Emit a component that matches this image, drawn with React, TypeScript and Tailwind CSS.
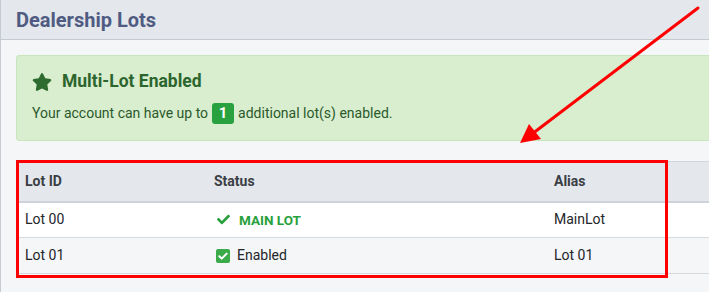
import React from 'react';

interface Lot {
  id: string;
  status: 'main' | 'enabled';
  alias: string;
}

const lots: Lot[] = [
  { id: 'Lot 00', status: 'main', alias: 'MainLot' },
  { id: 'Lot 01', status: 'enabled', alias: 'Lot 01' },
];

const StarIcon = () => (
  <svg viewBox="0 0 576 512" className="w-[20px] h-[18px] fill-[#2e6b2e]">
    <path d="M259.3 17.8L194 150.2 47.9 171.5c-26.2 3.8-36.7 36.1-17.7 54.6l105.7 103-25 145.5c-4.5 26.3 23.2 46 46.4 33.7L288 439.6l130.7 68.7c23.2 12.2 50.9-7.4 46.4-33.7l-25-145.5 105.7-103c19-18.5 8.5-50.8-17.700-54.6L382 150.2 316.7 17.8c-11.7-23.6-45.6-23.9-57.4 0z" />
  </svg>
);

const CheckIcon = () => (
  <svg viewBox="0 0 512 512" className="w-[15px] h-[13px] fill-[#28a03c]">
    <path d="M173.9 439.4l-166.4-166.4c-10-10-10-26.2 0-36.2l36.2-36.2c10-10 26.2-10 36.2 0L192 312.7 432.1 72.6c10-10 26.2-10 36.2 0l36.2 36.2c10 10 10 26.2 0 36.2L210.1 439.4c-10 10-26.2 10-36.2 0z" />
  </svg>
);

const CheckSquare = () => (
  <span className="w-[14px] h-[14px] rounded-[2px] bg-[#3bab4a] flex items-center justify-center">
    <svg viewBox="0 0 14 14" className="w-[14px] h-[14px]">
      <path d="M3.3 7.2l2.4 2.4 5-5" fill="none" stroke="white" strokeWidth="2" strokeLinecap="round" strokeLinejoin="round" />
    </svg>
  </span>
);

export default function App() {
  return (
    <div className="relative w-[709px] h-[292px] overflow-hidden bg-[#f5f6f8] font-['Roboto',sans-serif]">
      <div className="w-[780px] h-full border-l border-[#c6cad1]">
        {/* Card header */}
        <div className="h-[40px] bg-[#e4e7ec] border-b border-[#c5c9d0] px-[15px] flex items-center">
          <h1 className="text-[20px] font-bold text-[#4f5b82] leading-none">Dealership Lots</h1>
        </div>

        <div className="px-[15px] pt-[15px]">
          {/* Alert */}
          <div className="h-[86px] bg-[#d9edcf] border border-[#c9e5bd] rounded-[3px] px-[15px] pt-[17px]">
            <div className="flex items-center gap-[10px]">
              <StarIcon />
              <span className="text-[17.5px] font-bold text-[#2c652d] leading-none">Multi-Lot Enabled</span>
            </div>
            <p className="mt-[12px] text-[14px] text-[#2b5a2b] flex items-center gap-[4px]">
              <span>Your account can have up to</span>
              <span className="inline-flex items-center justify-center w-[22px] h-[21px] rounded-[3px] bg-[#28a13e] text-white font-bold text-[15px]">1</span>
              <span>additional lot(s) enabled.</span>
            </p>
          </div>

          {/* Lots table */}
          <table className="mt-[20px] w-[760px] border-collapse text-left">
            <thead>
              <tr className="bg-[#e4e7ec] border-t border-[#d3d7dd] border-b-2 border-b-[#cfd3d9]">
                <th className="w-[190px] h-[40px] px-[9px] text-[14px] font-bold text-[#3a3e45]">Lot ID</th>
                <th className="w-[340px] px-[8px] text-[14px] font-bold text-[#3a3e45]">Status</th>
                <th className="px-[8px] text-[14px] font-bold text-[#3a3e45]">Alias</th>
              </tr>
            </thead>
            <tbody>
              {lots.map((lot, i) => (
                <tr key={lot.id} className={`border-b border-[#d6d9de] ${i % 2 === 0 ? 'bg-white' : 'bg-[#f5f6f8]'}`}>
                  <td className="h-[36px] px-[9px] text-[14px] text-[#232529]">{lot.id}</td>
                  <td className="px-[8px] text-[14px] text-[#232529]">
                    {lot.status === 'main' ? (
                      <span className="flex items-center gap-[8px] pl-[2px]">
                        <CheckIcon />
                        <span className="text-[13.5px] font-bold text-[#28a03c]">MAIN LOT</span>
                      </span>
                    ) : (
                      <span className="flex items-center gap-[7px] pl-[2px]">
                        <CheckSquare />
                        <span>Enabled</span>
                      </span>
                    )}
                  </td>
                  <td className="px-[8px] text-[14px] text-[#232529]">{lot.alias}</td>
                </tr>
              ))}
            </tbody>
          </table>
        </div>
      </div>

      {/* Annotation: red box around table */}
      <div className="absolute left-[16px] top-[160px] w-[652px] h-[118px] border-[3px] border-[#ff0000] pointer-events-none" />

      {/* Annotation: arrow */}
      <svg className="absolute inset-0 pointer-events-none" width="709" height="292" viewBox="0 0 709 292">
        <line x1="698" y1="8" x2="532" y2="134" stroke="#ff0000" strokeWidth="3" strokeLinecap="round" />
        <polygon points="520,143 529,124 541,139" fill="#ff0000" />
      </svg>
    </div>
  );
}
